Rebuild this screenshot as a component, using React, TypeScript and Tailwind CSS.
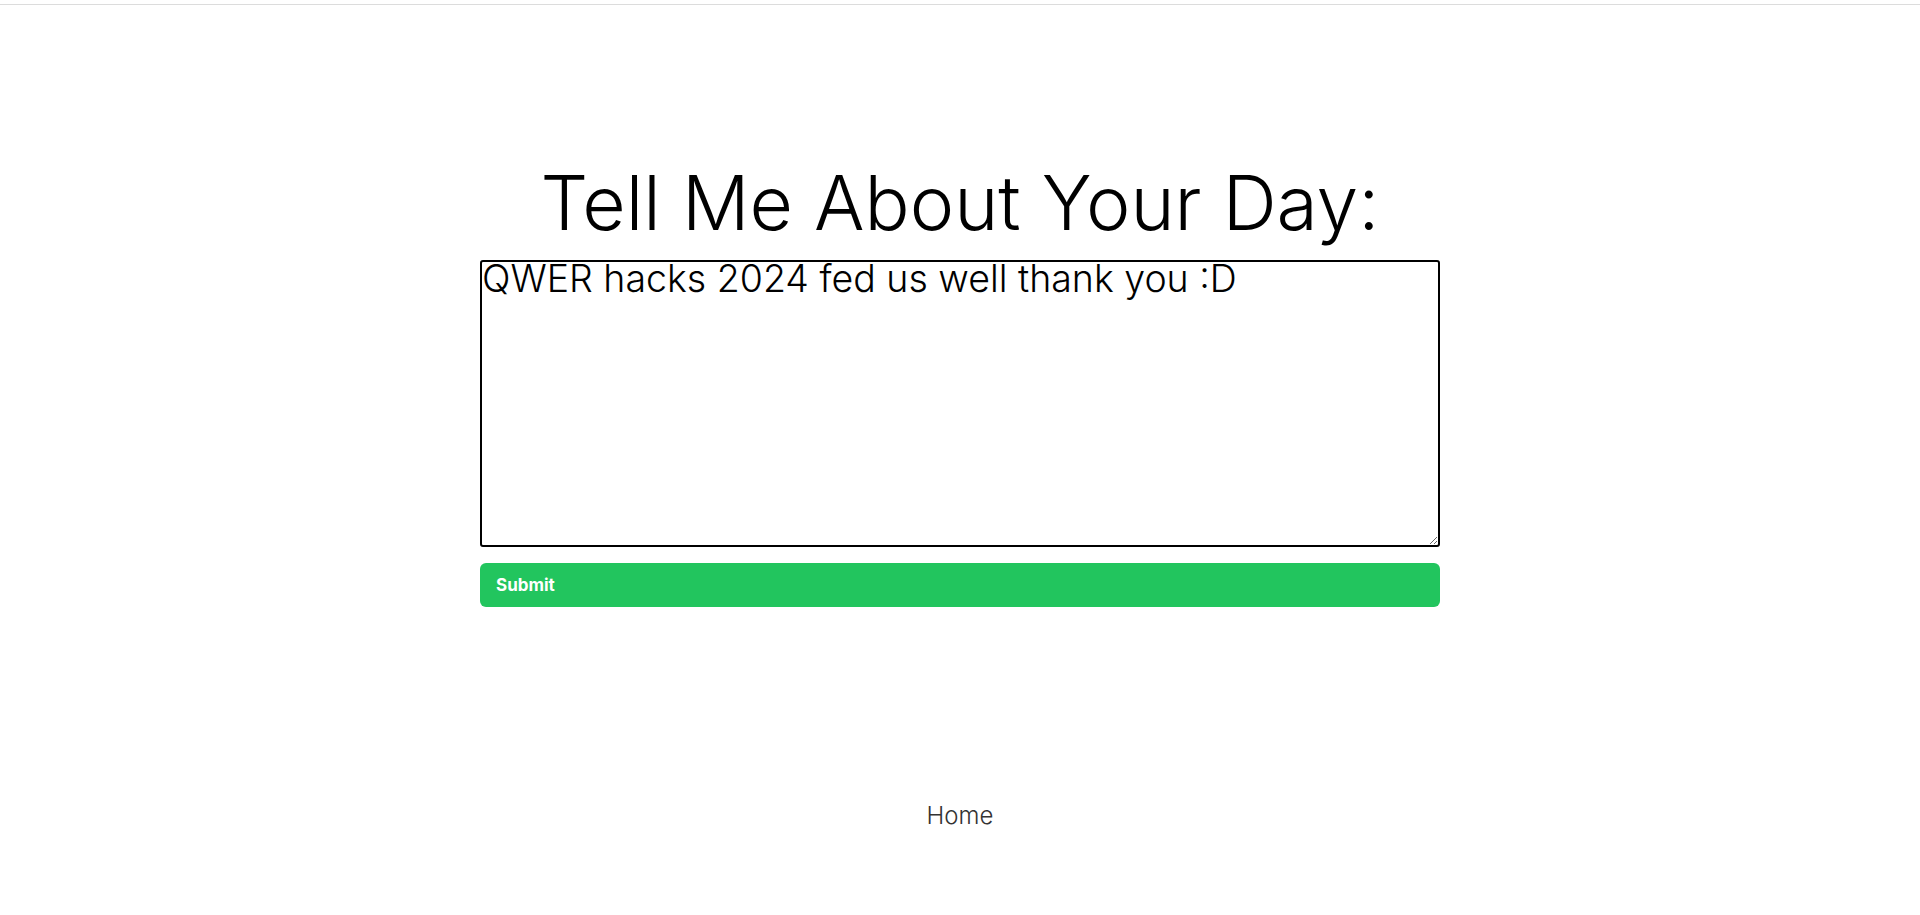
import React from "react";

export default function App() {
  return (
    <div className="min-h-[915px] w-full bg-white" style={{ fontFamily: "Inter, 'Noto Sans', sans-serif" }}>
      <div className="h-[5px] w-full border-b border-[#dcdcdc]" />
      <div className="flex flex-col items-center">
        <h1 className="mt-[160px] text-[75px] font-light leading-none text-black">Tell Me About Your Day:</h1>
        <form className="mt-[20px] flex w-[960px] flex-col gap-4" onSubmit={(e) => e.preventDefault()}>
          <textarea
            className="h-[287px] w-full rounded-[3px] border-2 border-black p-0 text-[37.5px] font-light leading-[0.9] text-black outline-none"
            defaultValue="QWER hacks 2024 fed us well thank you :D"
          />
          <button
            type="submit"
            className="h-[44px] w-full rounded-md bg-[#22c55e] px-4 pt-px text-left text-[17px] font-bold text-white"
          >
            Submit
          </button>
        </form>
        <div className="mt-[197px] text-[24px] font-light leading-none text-[#333]">Home</div>
      </div>
    </div>
  );
}
